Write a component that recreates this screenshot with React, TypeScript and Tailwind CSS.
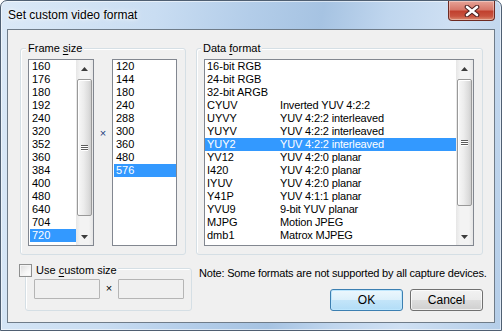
import React from "react";

const FONT = "font-['Liberation_Sans',Arial,sans-serif]";

function Arrow({ up }: { up: boolean }) {
  return (
    <svg width="7" height="4" viewBox="0 0 7 4">
      {up ? (
        <polygon points="3.5,0 7,4 0,4" fill="#3c3c3c" />
      ) : (
        <polygon points="0,0 7,0 3.5,4" fill="#3c3c3c" />
      )}
    </svg>
  );
}

function Gripper() {
  return (
    <div className="flex flex-col gap-[1px]">
      <div className="w-[7px] h-[1px] bg-[#5c5c5c] shadow-[0_1px_0_#ffffff]" />
      <div className="w-[7px] h-[1px] bg-[#5c5c5c] shadow-[0_1px_0_#ffffff]" />
      <div className="w-[7px] h-[1px] bg-[#5c5c5c] shadow-[0_1px_0_#ffffff]" />
    </div>
  );
}

function ScrollBar({ thumbClass }: { thumbClass: string }) {
  return (
    <div className="w-[17px] shrink-0 flex flex-col bg-[linear-gradient(to_right,#e6e6e6,#f3f3f3_25%,#f3f3f3_75%,#e6e6e6)]">
      <div className="h-[17px] flex items-center justify-center">
        <Arrow up />
      </div>
      <div className="flex-1 px-[1px] pt-[2px]">
        <div
          className={
            thumbClass +
            " rounded-[2px] border border-[#999999] bg-[linear-gradient(to_right,#f8f8f8,#ececec_45%,#dcdcdc_80%,#cfcfcf)] shadow-[inset_1px_1px_0_#ffffff] flex items-center justify-center"
          }
        >
          <Gripper />
        </div>
      </div>
      <div className="h-[17px] flex items-center justify-center">
        <Arrow up={false} />
      </div>
    </div>
  );
}

function Row({ text, selected }: { text: string; selected?: boolean }) {
  return (
    <div
      className={
        "h-[13px] leading-[13px] pl-[2px] whitespace-nowrap " +
        (selected ? "bg-[#3399ff] text-white" : "text-black")
      }
    >
      {text}
    </div>
  );
}

const widths = ["160", "176", "180", "192", "240", "320", "352", "360", "384", "400", "480", "640", "704", "720"];
const heights = ["120", "144", "180", "240", "288", "300", "360", "480", "576"];
const formats: [string, string][] = [
  ["16-bit RGB", ""],
  ["24-bit RGB", ""],
  ["32-bit ARGB", ""],
  ["CYUV", "Inverted YUV 4:2:2"],
  ["UYVY", "YUV 4:2:2 interleaved"],
  ["YUYV", "YUV 4:2:2 interleaved"],
  ["YUY2", "YUV 4:2:2 interleaved"],
  ["YV12", "YUV 4:2:0 planar"],
  ["I420", "YUV 4:2:0 planar"],
  ["IYUV", "YUV 4:2:0 planar"],
  ["Y41P", "YUV 4:1:1 planar"],
  ["YVU9", "9-bit YUV planar"],
  ["MJPG", "Motion JPEG"],
  ["dmb1", "Matrox MJPEG"],
];

export default function App() {
  return (
    <div className={FONT + " w-[502px] h-[331px] text-[11px] text-black"}>
      <div className="w-[502px] h-[331px] flex flex-col rounded-t-[7px] border border-[#4f5f72] shadow-[inset_0_0_0_1px_rgba(255,255,255,0.55)] bg-[linear-gradient(100deg,#dbe9f7_0%,#c9ddf2_28%,#b3cde9_45%,#a6c3e2_58%,#c0d6ee_70%,#cfe0f3_82%,#b4cde8_100%)]">
        {/* Title bar */}
        <div className="h-[28px] flex items-start justify-between">
          <div className="pl-[7px] pt-[6px] text-[12px] leading-[16px] [text-shadow:0_0_6px_#ffffff,0_0_3px_#ffffff]">
            Set custom video format
          </div>
          <div className="mr-[6px] w-[47px] h-[20px] rounded-b-[4px] border border-t-0 border-[#6d2a22] bg-[linear-gradient(to_bottom,#e6a397_0%,#d7786a_45%,#c1412f_55%,#c8533f_80%,#db8a70_100%)] shadow-[inset_0_0_0_1px_rgba(255,255,255,0.35)] flex items-center justify-center">
            <svg width="16" height="12" viewBox="0 0 16 12">
              <path d="M3 2 L13 10 M13 2 L3 10" stroke="#4a2020" strokeWidth="4.6" strokeLinecap="round" />
              <path d="M3 2 L13 10 M13 2 L3 10" stroke="#ffffff" strokeWidth="2.6" strokeLinecap="round" />
            </svg>
          </div>
        </div>

        {/* Client area */}
        <div className="mx-[6px] h-[294px] border border-[#6f7c89] bg-[#f0f0f0] flex flex-col">
          {/* Top row */}
          <div className="flex items-start pl-[12px] pt-[18px]">
            {/* Frame size group */}
            <div className="relative w-[166px] h-[207px] rounded-[3px] border border-[#d5dfe5] shadow-[inset_1px_1px_0_#ffffff] pl-[7px] pt-[10px] flex items-start">
              <span className="absolute left-[5px] top-[-8px] h-[14px] leading-[14px] px-[2px] bg-[#f0f0f0]">
                Frame <span className="underline underline-offset-[2px]">s</span>ize
              </span>
              <div className="w-[66px] h-[187px] border border-[#828790] bg-white flex">
                <div className="flex-1 pl-[1px]">
                  {widths.map((w) => (
                    <Row key={w} text={w} selected={w === "720"} />
                  ))}
                </div>
                <ScrollBar thumbClass="h-[137px]" />
              </div>
              <div className="w-[18px] mt-[67px] h-[14px] leading-[14px] text-center text-[#1e3c7e]">×</div>
              <div className="w-[65px] h-[187px] border border-[#828790] bg-white pl-[1px]">
                {heights.map((h) => (
                  <Row key={h} text={h} selected={h === "576"} />
                ))}
              </div>
            </div>

            {/* Data format group */}
            <div className="relative ml-[10px] w-[287px] h-[207px] rounded-[3px] border border-[#d5dfe5] shadow-[inset_1px_1px_0_#ffffff] pl-[7px] pt-[10px]">
              <span className="absolute left-[4px] top-[-8px] h-[14px] leading-[14px] px-[2px] bg-[#f0f0f0]">
                Data <span className="underline underline-offset-[2px]">f</span>ormat
              </span>
              <div className="w-[270px] h-[187px] border border-[#828790] bg-white flex">
                <div className="flex-1">
                  {formats.map(([a, b]) => (
                    <div
                      key={a}
                      className={
                        "h-[13px] leading-[13px] pl-[2px] flex whitespace-nowrap " +
                        (a === "YUY2" ? "bg-[#3399ff] text-white" : "text-black")
                      }
                    >
                      <span className="w-[73px] shrink-0">{a}</span>
                      <span className="tracking-[-0.15px]">{b}</span>
                    </div>
                  ))}
                </div>
                <ScrollBar thumbClass="h-[127px]" />
              </div>
            </div>
          </div>

          {/* Bottom row */}
          <div className="flex items-start pl-[17px] mt-[13px]">
            <div className="relative w-[167px] h-[43px] rounded-[3px] border border-[#d5dfe5] shadow-[inset_1px_1px_0_#ffffff] pl-[8px] pt-[10px] flex items-start">
              <div className="absolute left-[-7px] top-[-6px] h-[14px] flex items-center bg-[#f0f0f0] pr-[1px]">
                <div className="w-[13px] h-[13px] border border-[#8e8f8f] bg-[linear-gradient(135deg,#dcdcdc,#f6f6f6_60%,#ffffff)] shadow-[inset_0_0_0_1px_#f4f4f4]" />
                <span className="ml-[4px] leading-[14px]">
                  Use <span className="underline underline-offset-[2px]">c</span>ustom size
                </span>
              </div>
              <div className="w-[66px] h-[20px] border border-[#b5b5b5] bg-[#f0f0f0] rounded-[1px]" />
              <div className="w-[18px] h-[20px] leading-[18px] text-center">×</div>
              <div className="w-[66px] h-[20px] border border-[#b5b5b5] bg-[#f0f0f0] rounded-[1px]" />
            </div>

            <div className="ml-[7px] w-[295px] flex flex-col">
              <div className="mt-[-2px] h-[14px] leading-[14px] whitespace-nowrap tracking-[-0.19px]">
                Note: Some formats are not supported by all capture devices.
              </div>
              <div className="mt-[9px] flex justify-end gap-[7px] pr-[11px]">
                <button className="w-[73px] h-[22px] rounded-[3px] border border-[#3c7fb1] bg-[linear-gradient(to_bottom,#ecf7fd_0%,#dcf0fb_48%,#c3e5f9_52%,#b2ddf7_100%)] shadow-[inset_0_0_0_1px_#bde6fd] text-[12px] leading-[20px] text-black">
                  OK
                </button>
                <button className="w-[73px] h-[22px] rounded-[3px] border border-[#707070] bg-[linear-gradient(to_bottom,#f2f2f2_0%,#ebebeb_48%,#dddddd_52%,#cfcfcf_100%)] shadow-[inset_0_0_0_1px_rgba(255,255,255,0.7)] text-[12px] leading-[20px] text-black">
                  Cancel
                </button>
              </div>
            </div>
          </div>
        </div>
      </div>
    </div>
  );
}
